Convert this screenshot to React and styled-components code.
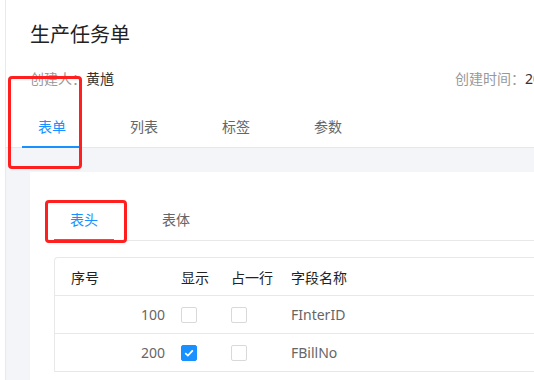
import React from "react";
import styled, { createGlobalStyle } from "styled-components";

const GlobalStyle = createGlobalStyle`
  body {
    margin: 0;
    background: #fff;
    overflow: hidden;
    font-family: "Noto Sans", "Noto Sans CJK SC", sans-serif;
    color: #333;
  }
`;

const Page = styled.div`
  position: relative;
  margin-left: 5px;
  width: 720px;
  height: 380px;
  border-left: 1px solid #f2e4e9;
  background: #f4f5f9;
`;

const Header = styled.div`
  background: #fff;
  padding: 21px 0 0 24px;
  border-bottom: 1px solid #e8e8e8;
`;

const Title = styled.h1`
  margin: 0;
  font-size: 20px;
  font-weight: 400;
  line-height: 28px;
  color: #222;
`;

const Meta = styled.div`
  display: grid;
  grid-template-columns: 425px auto;
  margin-top: 19px;
  font-size: 14px;
  line-height: 22px;
  white-space: nowrap;
`;

const MetaLabel = styled.span`
  color: #999;
`;

const MetaValue = styled.span`
  color: #333;
`;

const TabBar = styled.div`
  display: flex;
  gap: ${(p) => p.$gap}px;
  margin: ${(p) => p.$margin};
  border-bottom: ${(p) => (p.$line ? "1px solid #e8e8e8" : "none")};
`;

const Tab = styled.div`
  position: relative;
  height: 40px;
  line-height: 40px;
  padding: ${(p) => p.$pad};
  font-size: 14px;
  color: ${(p) => (p.$active ? "#1890ff" : "#666")};
  &::after {
    content: "";
    display: ${(p) => (p.$active ? "block" : "none")};
    position: absolute;
    left: 0;
    right: 0;
    bottom: -1px;
    height: 2px;
    background: #1890ff;
  }
`;

const Body = styled.div`
  padding: 24px 0 0 24px;
`;

const Card = styled.div`
  background: #fff;
  padding: 28px 0 0 24px;
  height: 220px;
`;

const Table = styled.div`
  margin-top: 16px;
  border: 1px solid #e8e8e8;
  border-right: none;
  border-bottom: none;
  border-radius: 4px 0 0 0;
`;

const Row = styled.div`
  display: grid;
  grid-template-columns: 126px 50px 60px 1fr;
  align-items: center;
  height: 37px;
  border-bottom: 1px solid #e8e8e8;
  font-size: 14px;
  color: ${(p) => (p.$head ? "#222" : "#666")};
`;

const NumCell = styled.div`
  padding: 0 16px;
  text-align: ${(p) => (p.$head ? "left" : "right")};
`;

const Cell = styled.div`
  display: flex;
  align-items: center;
  white-space: nowrap;
`;

const Box = styled.span`
  display: inline-flex;
  align-items: center;
  justify-content: center;
  width: 16px;
  height: 16px;
  box-sizing: border-box;
  border-radius: 2px;
  border: 1px solid ${(p) => (p.$checked ? "#1890ff" : "#d9d9d9")};
  background: ${(p) => (p.$checked ? "#1890ff" : "#fff")};
`;

const Marker = styled.div`
  position: absolute;
  border: 3px solid #ff1f1f;
  border-radius: 4px;
  box-sizing: border-box;
  pointer-events: none;
`;

const Check = ({ checked }) => (
  <Box $checked={checked}>
    {checked && (
      <svg width="10" height="8" viewBox="0 0 10 8">
        <path d="M1.2 4.1 L3.9 6.6 L8.8 1.4" fill="none" stroke="#fff" strokeWidth="1.8" />
      </svg>
    )}
  </Box>
);

const rows = [
  { no: 100, show: false, line: false, name: "FInterID" },
  { no: 200, show: true, line: false, name: "FBillNo" },
];

export default function App() {
  return (
    <>
      <GlobalStyle />
      <Page>
        <Header>
          <Title>生产任务单</Title>
          <Meta>
            <div>
              <MetaLabel>创建人：</MetaLabel>
              <MetaValue>黄馗</MetaValue>
            </div>
            <div>
              <MetaLabel>创建时间：</MetaLabel>
              <MetaValue>2021-06-18 10:22:31</MetaValue>
            </div>
          </Meta>
          <TabBar $gap={34} $margin="17px 0 0 -8px">
            <Tab $active $pad="0 14px 0 16px">表单</Tab>
            <Tab $pad="0 14px 0 16px">列表</Tab>
            <Tab $pad="0 14px 0 16px">标签</Tab>
            <Tab $pad="0 14px 0 16px">参数</Tab>
          </TabBar>
        </Header>
        <Body>
          <Card>
            <TabBar $gap={32} $margin="0" $line>
              <Tab $active $pad="0 16px">表头</Tab>
              <Tab $pad="0 16px">表体</Tab>
            </TabBar>
            <Table>
              <Row $head>
                <NumCell $head>序号</NumCell>
                <Cell>显示</Cell>
                <Cell>占一行</Cell>
                <Cell>字段名称</Cell>
              </Row>
              {rows.map((r) => (
                <Row key={r.no}>
                  <NumCell>{r.no}</NumCell>
                  <Cell>
                    <Check checked={r.show} />
                  </Cell>
                  <Cell>
                    <Check checked={r.line} />
                  </Cell>
                  <Cell>{r.name}</Cell>
                </Row>
              ))}
            </Table>
          </Card>
        </Body>
        <Marker style={{ left: 2, top: 76, width: 74, height: 93 }} />
        <Marker style={{ left: 39, top: 200, width: 82, height: 43 }} />
      </Page>
    </>
  );
}
